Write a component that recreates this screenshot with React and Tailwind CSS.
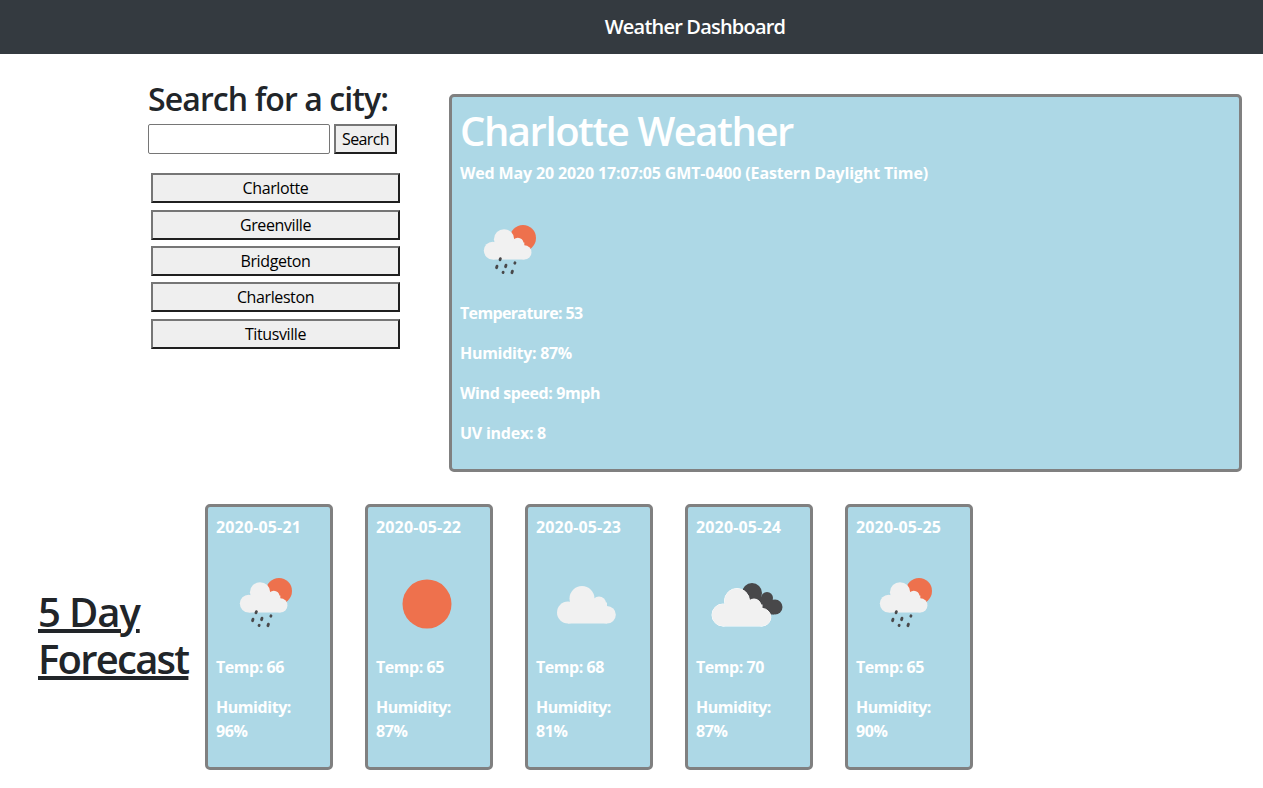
const FONT = "font-['Open_Sans','Noto_Sans',sans-serif]";

function CloudShape({ fill = "#f1f1f1" }) {
  return (
    <g fill={fill}>
      <circle cx="47" cy="46" r="12.5" />
      <circle cx="64" cy="51" r="7" />
      <circle cx="33" cy="60" r="11" />
      <circle cx="72" cy="62.2" r="8.8" />
      <rect x="33" y="50" width="39" height="21" />
    </g>
  );
}

function Rain() {
  return (
    <svg viewBox="0 0 100 100" className="block w-[100px] h-[100px]">
      <circle cx="63" cy="38" r="13" fill="#ee714d" />
      <g transform="translate(6 2) scale(0.81 0.81)">
        <CloudShape />
      </g>
      <g stroke="#48484a" strokeWidth="2.8" strokeLinecap="round">
        <path d="M40.4 58.6l-.4 1.2" />
        <path d="M37 66.2l-.5 1.5" />
        <path d="M46 65.2l-.5 1.5" />
        <path d="M55 62.8l-.2 .5" />
        <path d="M43.2 72.2l-.2 .4" />
        <path d="M52.4 71.2l-.5 1.5" />
      </g>
    </svg>
  );
}

function Sun() {
  return (
    <svg viewBox="0 0 100 100" className="block w-[100px] h-[100px]">
      <circle cx="51" cy="51" r="24.5" fill="#ee714d" />
    </svg>
  );
}

function Cloud() {
  return (
    <svg viewBox="0 0 100 100" className="block w-[100px] h-[100px]">
      <g transform="translate(-1 -0.5)">
        <CloudShape />
      </g>
    </svg>
  );
}

function Broken() {
  return (
    <svg viewBox="0 0 100 100" className="block w-[100px] h-[100px]">
      <g fill="#48484a">
        <circle cx="56" cy="40" r="10" />
        <circle cx="71" cy="45" r="6" />
        <circle cx="79" cy="54" r="7.5" />
        <path d="M50 40L78 47V61.5H60Z" />
      </g>
      <g transform="translate(-6 2)" stroke="#ffffff" strokeWidth="1">
        <CloudShape />
      </g>
      <g transform="translate(-6 2)">
        <CloudShape />
      </g>
    </svg>
  );
}

const days = [
  { d: "2020-05-21", t: 66, h: "96%", I: Rain },
  { d: "2020-05-22", t: 65, h: "87%", I: Sun },
  { d: "2020-05-23", t: 68, h: "81%", I: Cloud },
  { d: "2020-05-24", t: 70, h: "87%", I: Broken },
  { d: "2020-05-25", t: 65, h: "90%", I: Rain },
];

const cities = ["Charlotte", "Greenville", "Bridgeton", "Charleston", "Titusville"];

const btn =
  "bg-[#efefef] border-2 border-t-[#767676] border-l-[#767676] border-r-[#1f1f1f] border-b-[#1f1f1f] text-black text-[16px] leading-[24px] h-[30px] flex items-center justify-center";

export default function App() {
  return (
    <div className={`${FONT} min-h-[788px] bg-white text-[#212529] text-[16px] leading-[24px]`}>
      <nav className="h-[54px] bg-[#343a40] flex items-center justify-center pl-[127px] text-white text-[20px] font-semibold tracking-[-0.8px]">
        Weather Dashboard
      </nav>

      <div className="flex pl-[148px] pt-[41px]">
        <div className="w-[301px] shrink-0">
          <h2 className="text-[32px] leading-[38px] font-semibold -mt-[15px] tracking-[-0.9px]">Search for a city:</h2>
          <div className="flex gap-[4px] mt-[6px]">
            <input className="w-[182px] h-[30px] border border-[#767676] rounded-[2px] bg-white" />
            <div className={`${btn} w-[63px] tracking-[-0.6px]`}>Search</div>
          </div>
          <div className="flex flex-col gap-[6.4px] mt-[19.2px] ml-[3px] w-[249px]">
            {cities.map((c) => (
              <div key={c} className={`${btn} tracking-[-0.4px]`}>{c}</div>
            ))}
          </div>
        </div>

        <section className="w-[793px] h-[378px] -mt-[1px] border-[3px] border-[#808080] rounded-[5px] bg-[#add8e6] px-[8px] pt-[10px] pb-[8px] text-white font-bold">
          <h1 className="text-[40px] leading-[48px] font-semibold mb-[6px] tracking-[-1.45px]">Charlotte Weather</h1>
          <p className="mb-[15px] tracking-[-0.15px]">Wed May 20 2020 17:07:05 GMT-0400 (Eastern Daylight Time)</p>
          <Rain />
          <p className="mt-[1px] mb-[16px] tracking-[-0.65px]">Temperature: 53</p>
          <p className="mb-[16px] tracking-[-0.3px]">Humidity: 87%</p>
          <p className="mb-[16px] tracking-[-0.4px]">Wind speed: 9mph</p>
          <p className="tracking-[-0.25px]">UV index: 8</p>
        </section>
      </div>

      <div className="flex items-center pl-[38px] mt-[32px]">
        <h2 className="w-[167px] shrink-0 text-[40px] leading-[47px] font-semibold underline mb-[5px]">
          <span className="block tracking-[-1.1px]">5 Day</span>
          <span className="block tracking-[-1.75px]">Forecast</span>
        </h2>
        <div className="flex gap-[32px]">
          {days.map(({ d, t, h, I }) => (
            <div key={d} className="w-[128px] h-[266px] border-[3px] border-[#808080] rounded-[5px] bg-[#add8e6] p-[8px] text-white font-bold tracking-[-0.45px]">
              <p className="mb-[14px] tracking-[0.15px]">{d}</p>
              <I />
              <p className="mt-[2px] mb-[16px]">Temp: {t}</p>
              <p>Humidity:</p>
              <p>{h}</p>
            </div>
          ))}
        </div>
      </div>
    </div>
  );
}
